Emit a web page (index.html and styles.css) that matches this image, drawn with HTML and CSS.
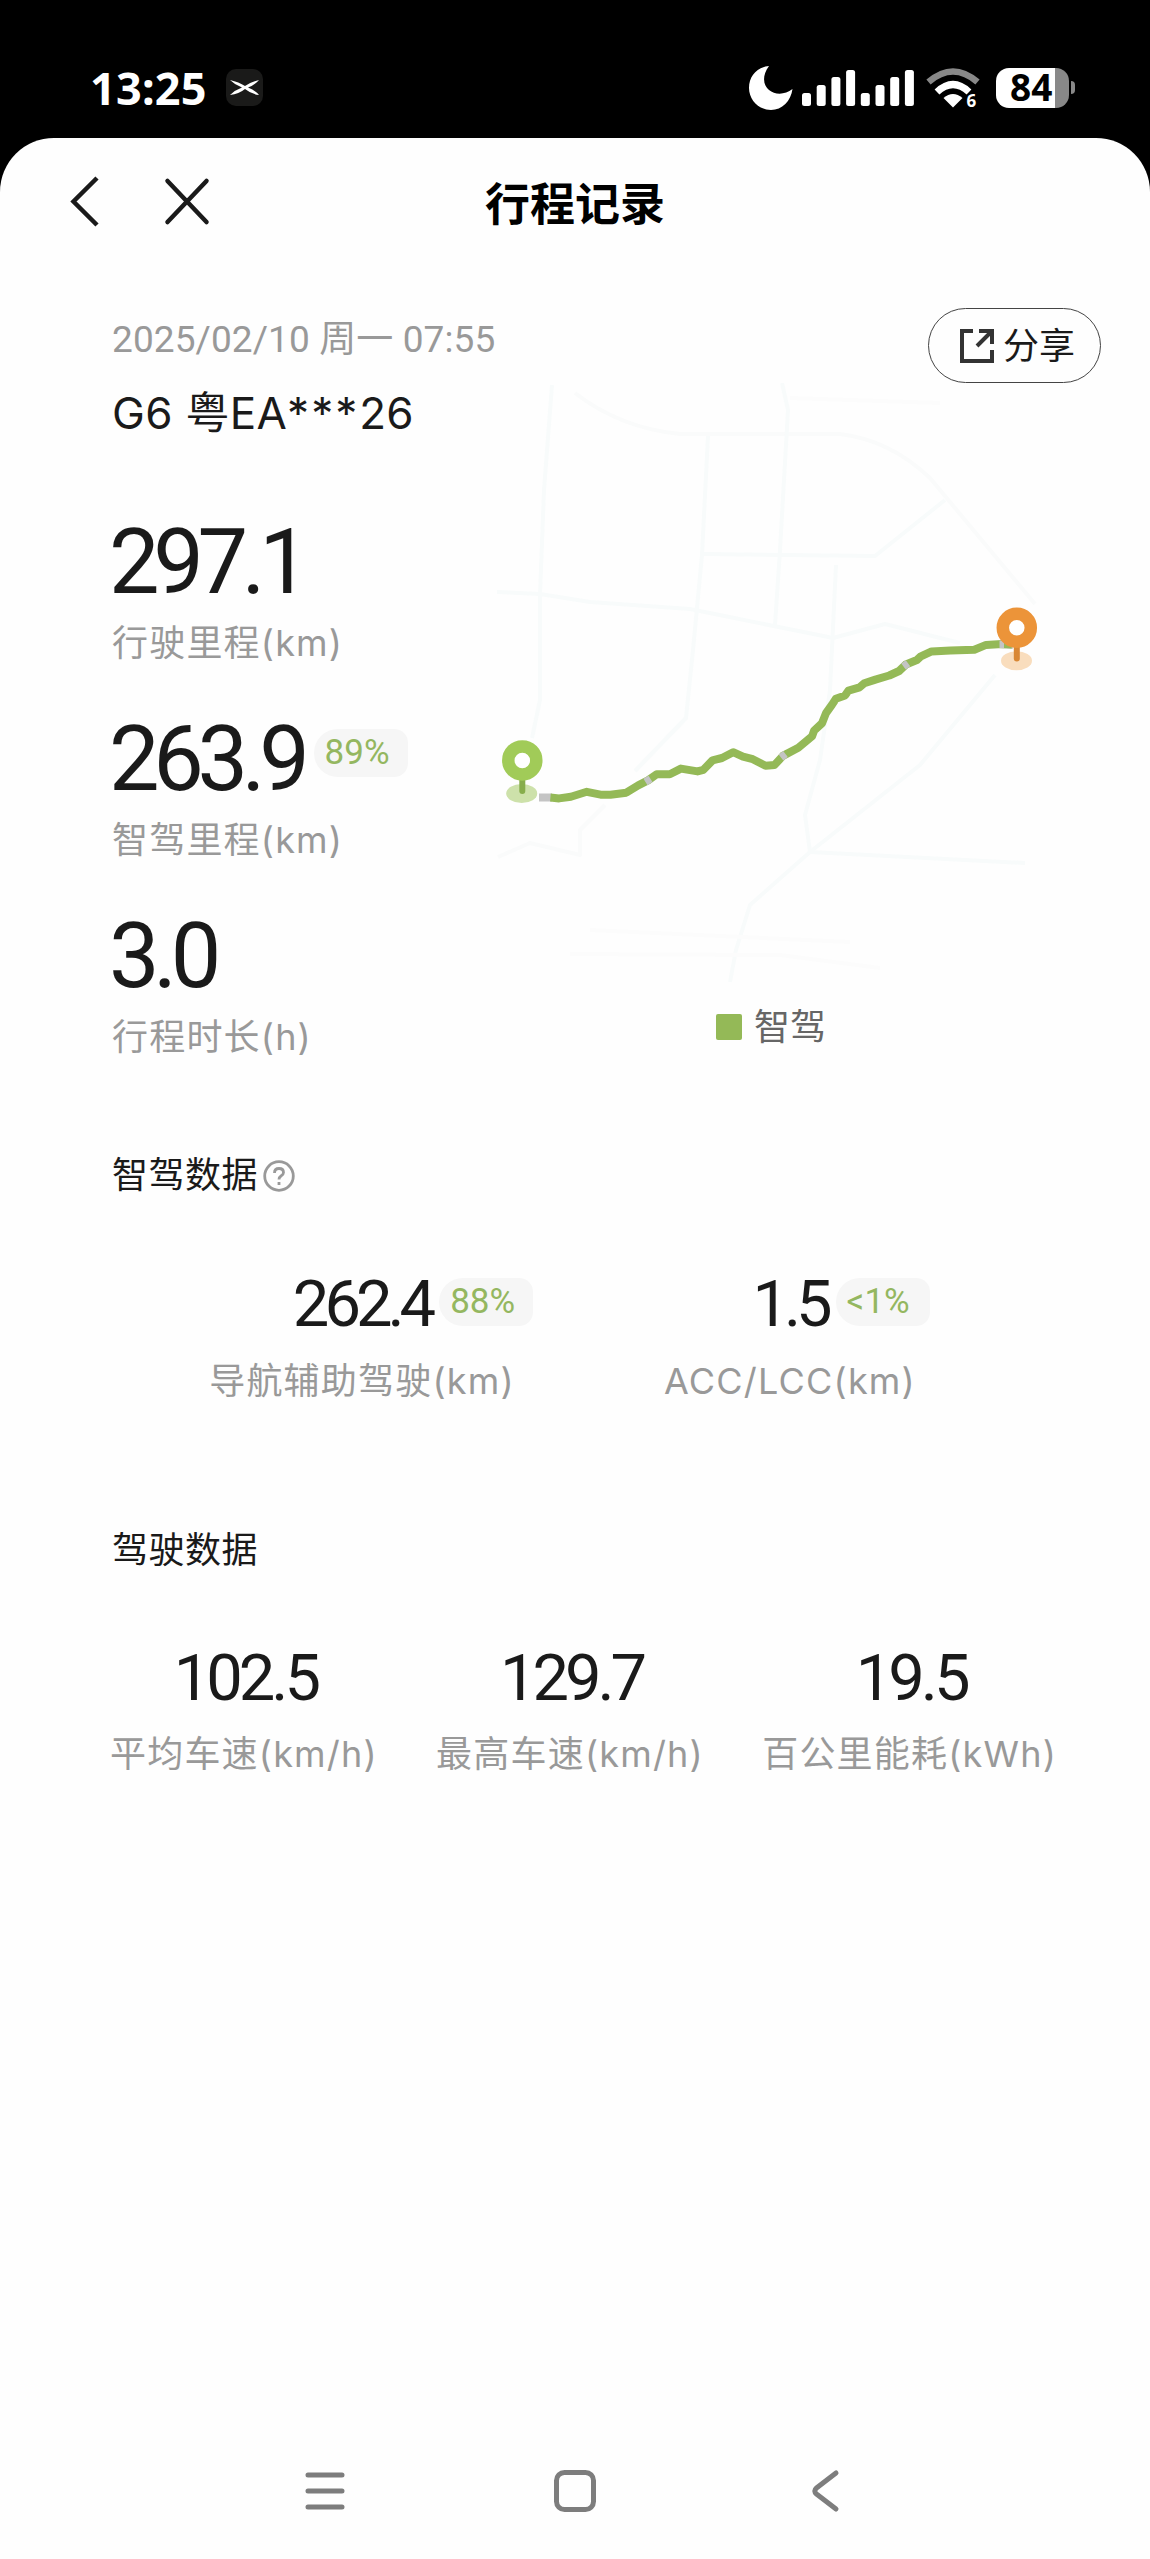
FILE: index.html
```html
<!DOCTYPE html>
<html lang="zh-CN">
<head>
    <meta charset="UTF-8">
    <meta name="viewport" content="width=device-width, initial-scale=1.0">
    <title>行程记录</title>
    <link rel="stylesheet" href="styles.css">
</head>
<body>
    <div class="status-bar">
        <span class="clock">13:25</span>
        <svg class="app-icon" width="37" height="37" viewBox="0 0 37 37">
            <rect width="37" height="37" rx="10" fill="#1a1a19"/>
            <path d="M4 11 Q13 13 19 17 Q25 13 33 11 Q29 16 22 18.5 Q29 21 33 26 Q25 25 19 20 Q13 25 4 26 Q9 21 16 18.5 Q9 16 4 11Z" fill="#fff"/>
        </svg>
        <div class="status-icons">
            <svg width="44" height="44" viewBox="0 0 44 44">
                <path d="M20 0 C12 11 15 20 20 24 C26 29 36 29 43.500 23 C42 35 33 44 22 44 C10 44 0 34 0 22 C0 10 8 1 20 0Z" fill="#fff"/>
            </svg>
            <svg class="signal" width="112" height="36" viewBox="0 0 112 36" fill="#fff">
                <rect x="0" y="23" width="9" height="13" rx="2.500"/>
                <rect x="14.700" y="15" width="9" height="21" rx="2.500"/>
                <rect x="29.400" y="7" width="9" height="29" rx="2.500"/>
                <rect x="44.100" y="0" width="9" height="36" rx="2.500"/>
                <rect x="58.800" y="23" width="9" height="13" rx="2.500"/>
                <rect x="73.500" y="15" width="9" height="21" rx="2.500"/>
                <rect x="88.200" y="7" width="9" height="29" rx="2.500"/>
                <rect x="102.900" y="0" width="9" height="36" rx="2.500"/>
            </svg>
            <svg class="wifi" width="54" height="50" viewBox="0 -5 54 50">
                <path d="M2.500 14 Q27 -7 51.500 14" fill="none" stroke="#888" stroke-width="6.500"/>
                <path d="M11 24 Q27 9 43 24" fill="none" stroke="#fff" stroke-width="7"/>
                <path d="M17.500 30 Q27 22 36.500 30 L27 39.500Z" fill="#fff"/>
                <text x="40.500" y="38.500" class="wifi-gen">6</text>
            </svg>
            <div class="battery"><span>84</span></div>
            <div class="battery-cap"></div>
        </div>
    </div>

    <div class="page">
        <div class="nav">
            <svg width="160" height="60" viewBox="0 0 160 60" fill="none" stroke="#1a1a1a" stroke-width="4.500">
                <path d="M28 7 L4.500 30.500 L28 54"/>
                <path d="M98.500 10 L137.500 51 M137.500 10 L98.500 51" stroke-linecap="round"/>
            </svg>
            <h1>行程记录</h1>
        </div>

        <div class="trip">
            <div class="trip-info">
                <div class="date">2025/02/10 周一 07:55</div>
                <div class="car">G6 粤EA<span class="mask">***</span>26</div>
                <div class="stat">
                    <div class="stat-value">297.1</div>
                    <div class="label">行驶里程(km)</div>
                </div>
                <div class="stat">
                    <div class="stat-value">263.9<span class="badge">89%</span></div>
                    <div class="label">智驾里程(km)</div>
                </div>
                <div class="stat">
                    <div class="stat-value">3.0</div>
                    <div class="label">行程时长(h)</div>
                </div>
            </div>
            <div class="trip-map">
                <button class="share">
                    <svg width="34" height="34" viewBox="0 0 34 34" fill="none" stroke="#333" stroke-width="4">
                        <path d="M13 2 H2 V32 H32 V21"/>
                        <path d="M19 2 H32 V15 M32 2 L17 17"/>
                    </svg>
                    <span>分享</span>
                </button>
                <svg width="620" height="600" viewBox="0 23 620 600" fill="none" stroke-linejoin="round">
                    <!-- 道路底图 -->
                    <g stroke="#f8fbfb" stroke-width="4">
                        <path d="M72 25 L64 130 L60 235 V340 L52 378"/>
                        <path d="M95 33 Q140 68 200 74 L360 74 Q410 80 450 118 L555 244" stroke="#fafbfb"/>
                        <path d="M228 76 L222 195 L213 290 L206 358 L155 411"/>
                        <path d="M302 23 L308 50 L300 190 L295 265"/>
                        <path d="M17 232 L60 234 L110 242 L210 249 L353 278 L405 264 L480 283"/>
                        <path d="M224 194 L395 196 L465 140"/>
                        <path d="M356 205 L350 330 L340 400 L325 455 L330 492 L545 503"/>
                        <path d="M515 315 L440 405 L330 492 L270 545 L256 590 L250 622"/>
                        <path d="M310 38 L460 43" stroke="#fcfcfc"/>
                        <path d="M125 445 L100 470 V495 L50 483 L18 497" stroke="#fafbfb"/>
                        <path d="M110 570 L370 582 M90 594 L300 595 L400 608" stroke="#fcfcfc"/>
                    </g>
                    <path d="M59 437.500 L72 437.500 M533 285 L520 284" stroke="#c4c4c4" stroke-width="8"/>
                    <path d="M70.400 437.600 L79.100 438.400 L90.900 436.700 L106.800 431.800 L120.600 434.700 H130.500 L146.300 432.700 L158.200 425.300 L168 420.400 L176.700 414.300 H189.800 L200.900 408.600 L217.500 411.400 L223.400 409.800 L232.500 400.400 L242 398 L253.100 392.200 L263 396.700 L272.800 399.200 L285.500 405.700 L294.600 404.900 L302.900 395.900 L318.300 387.800 L332.100 376.300 L334.100 370.600 L342 363.300 L346 353.100 L351.900 344.900 L355.900 338.800 L365 335.500 L368.500 330.600 L379.600 327.300 L384.300 323.300 L395.400 319.600 L409.300 315.500 L419.100 311 L425.900 304.500 L436.900 300 L440.900 296.300 L451.600 291.400 L470.500 290.600 L494.300 289.800 L506.100 284.900 L521.900 284.100 L531.800 284.500" stroke="#94b957" stroke-width="8"/>
                    <path d="M165.500 422 L170.500 418.800 M301 397.500 L305.500 394 M423.500 306.500 L428 303.200 M519.500 284.200 L524 284.200" stroke="#c4c4c4" stroke-width="7.500"/>
                    <!-- 起点 -->
                    <ellipse cx="41.700" cy="433.500" rx="15.500" ry="9.500" fill="#cde1aa"/>
                    <path d="M42.300 418 V431" stroke="#87ad4c" stroke-width="6" stroke-linecap="round"/>
                    <circle cx="42.300" cy="400.400" r="14" stroke="#a1cb58" stroke-width="12.500" fill="#fff"/>
                    <!-- 终点 -->
                    <ellipse cx="536.500" cy="300.800" rx="15.500" ry="9.500" fill="#f9ddbd"/>
                    <path d="M536.800 285 V298.500" stroke="#d98734" stroke-width="6" stroke-linecap="round"/>
                    <circle cx="536.800" cy="267.800" r="14" stroke="#ec9439" stroke-width="12.500" fill="#fff"/>
                </svg>
                <div class="legend"><i></i><span>智驾</span></div>
            </div>
        </div>

        <div class="section">
            <h2>智驾数据
                <svg width="32" height="32" viewBox="0 0 32 32" fill="none" stroke="#999" stroke-width="2.800">
                    <circle cx="16" cy="16" r="14.300"/>
                    <path d="M11.500 13 Q11.500 8.500 16 8.500 Q20.500 8.500 20.500 12.500 Q20.500 14.500 18 16 Q16 17.300 16 19.500"/>
                    <path d="M16 22 V25"/>
                </svg>
            </h2>
            <div class="assist">
                <div class="item">
                    <div class="value">262.4<span class="badge">88%</span></div>
                    <div class="label">导航辅助驾驶(km)</div>
                </div>
                <div class="item">
                    <div class="value">1.5<span class="badge">&lt;1%</span></div>
                    <div class="label">ACC/LCC(km)</div>
                </div>
            </div>
        </div>

        <div class="section drive-section">
            <h2>驾驶数据</h2>
            <div class="drive">
                <div class="item">
                    <div class="value">102.5</div>
                    <div class="label">平均车速(km/h)</div>
                </div>
                <div class="item">
                    <div class="value">129.7</div>
                    <div class="label">最高车速(km/h)</div>
                </div>
                <div class="item">
                    <div class="value">19.5</div>
                    <div class="label">百公里能耗(kWh)</div>
                </div>
            </div>
        </div>

        <div class="system-nav">
            <svg width="44" height="44" viewBox="0 0 44 44"><path d="M5 6 H39 M5 22 H39 M5 38 H39"/></svg>
            <svg width="44" height="44" viewBox="0 0 44 44"><rect x="3.500" y="3.500" width="37" height="37" rx="8"/></svg>
            <svg width="44" height="44" viewBox="0 0 44 44"><path d="M33 4 L13.500 19 Q10 22 13.500 25 L33 40"/></svg>
        </div>
    </div>
</body>
</html>
```
FILE: styles.css
```css
* {
    box-sizing: border-box;
}
body {
    margin: 0;
    background: #000;
    font-family: Roboto, "Noto Sans CJK SC", sans-serif;
    color: #1a1a1a;
}
svg {
    display: block;
    flex-shrink: 0;
}
/* 状态栏 */
.status-bar {
    display: flex;
    align-items: center;
    height: 138px;
    padding: 37px 75px 0 90px;
    color: #fff;
}
.clock {
    width: 136px;
    font-family: "Noto Sans", sans-serif;
    font-size: 45px;
    font-weight: 700;
    line-height: 60px;
    letter-spacing: 0.2px;
}
.status-icons {
    display: flex;
    align-items: center;
    margin-left: auto;
}
.signal {
    margin-left: 9px;
}
.wifi {
    margin-left: 12px;
}
.wifi-gen {
    font-family: "Noto Sans", sans-serif;
    font-size: 17px;
    font-weight: 700;
    fill: #fff;
    stroke: #000;
    stroke-width: 4px;
    paint-order: stroke;
}
.battery {
    width: 73px;
    height: 40px;
    margin-left: 16px;
    border-radius: 13px;
    background: linear-gradient(90deg, #fff 59px, #888 59px);
    color: #000;
    font-family: "Noto Sans", sans-serif;
    font-size: 37px;
    font-weight: 700;
    line-height: 38px;
    padding-left: 14px;
}
.battery-cap {
    width: 4px;
    height: 13px;
    margin-left: 2px;
    border-radius: 0 4px 4px 0;
    background: #888;
}
/* 页面 */
.page {
    display: flex;
    flex-direction: column;
    height: 2421px;
    background: #fefefe;
    border-radius: 54px 54px 0 0;
}
.nav {
    display: grid;
    grid-template-columns: 161px 1fr 161px;
    align-items: center;
    height: 130px;
    padding: 0 69px 4px;
}
.nav h1 {
    margin: 0;
    font-size: 45px;
    font-weight: 700;
    text-align: center;
    color: #000;
}
.trip {
    display: grid;
    grid-template-columns: 368px 621px;
    padding: 40px 0 0 112px;
}
.trip-info {
    padding-top: 7px;
}
.date {
    font-size: 37px;
    line-height: 50px;
    letter-spacing: 0.1px;
    color: #999;
    white-space: nowrap;
}
.car {
    margin-top: 20px;
    font-family: Inter, "Noto Sans CJK SC", sans-serif;
    font-size: 44px;
    line-height: 56px;
    letter-spacing: 0.3px;
    white-space: nowrap;
}
.mask {
    letter-spacing: 2px;
}
.stat {
    height: 147px;
    margin-bottom: 50px;
}
.car + .stat {
    margin-top: 81px;
}
.stat-value {
    display: flex;
    align-items: center;
    height: 80px;
    margin-left: -3px;
    font-size: 90px;
    letter-spacing: -6.3px;
}
.label {
    margin-top: 16px;
    font-family: Inter, "Noto Sans CJK SC", sans-serif;
    font-size: 36px;
    line-height: 50px;
    letter-spacing: 1.2px;
    color: #999;
    white-space: nowrap;
}
.badge {
    width: 94px;
    height: 48px;
    margin: 0 0 12px 12px;
    padding-left: 11px;
    border-radius: 24px 14px 14px 24px;
    background: #f6f6f6;
    color: #94b760;
    font-size: 35px;
    line-height: 48px;
    letter-spacing: 0;
}
.stat-value .badge {
    margin-left: 10px;
}
.trip-map {
    display: flex;
    flex-direction: column;
}
.share {
    display: flex;
    align-items: center;
    align-self: flex-end;
    gap: 9px;
    width: 173px;
    height: 75px;
    padding: 0 0 0 31px;
    border: 1px solid #444;
    border-radius: 38px;
    background: none;
    color: #1a1a1a;
    font-family: inherit;
    font-size: 36px;
}
.share span {
    padding-bottom: 6px;
}
.legend {
    display: flex;
    align-items: center;
    gap: 12px;
    margin: 18px 0 0 236px;
    font-size: 36px;
    line-height: 50px;
    color: #666;
}
.legend span {
    padding-top: 2px;
}
.legend i {
    width: 26px;
    height: 26px;
    border-radius: 2px;
    background: #94b957;
}
.section {
    padding: 38px 96px 0 112px;
}
.section h2 {
    display: flex;
    align-items: center;
    gap: 5px;
    margin: 0;
    font-size: 36px;
    font-weight: 400;
    line-height: 50px;
    letter-spacing: 0.5px;
}
.assist {
    display: grid;
    grid-template-columns: 428px 428px;
    margin: 73px 0 0 36px;
}
.item {
    display: flex;
    flex-direction: column;
    align-items: center;
}
.value {
    position: relative;
    font-size: 65px;
    line-height: 60px;
    letter-spacing: -5px;
}
/* 百分比挂在数字右侧，不影响居中 */
.value .badge {
    position: absolute;
    left: 100%;
    top: 4px;
    margin-left: 8px;
}
.item .label {
    margin-top: 22px;
}
.drive-section {
    padding-top: 120px;
}
.drive {
    display: flex;
    justify-content: space-between;
    margin: 72px -3px 0 -2px;
}
.drive .value {
    padding-left: 3px;
    letter-spacing: -4px;
}
.drive .label {
    margin-top: 21px;
}
.system-nav {
    display: flex;
    justify-content: center;
    gap: 206px;
    margin-top: auto;
    padding: 0 1px 46px 0;
}
.system-nav svg {
    fill: none;
    stroke: #7d7d7d;
    stroke-width: 5;
    stroke-linecap: round;
}
```
